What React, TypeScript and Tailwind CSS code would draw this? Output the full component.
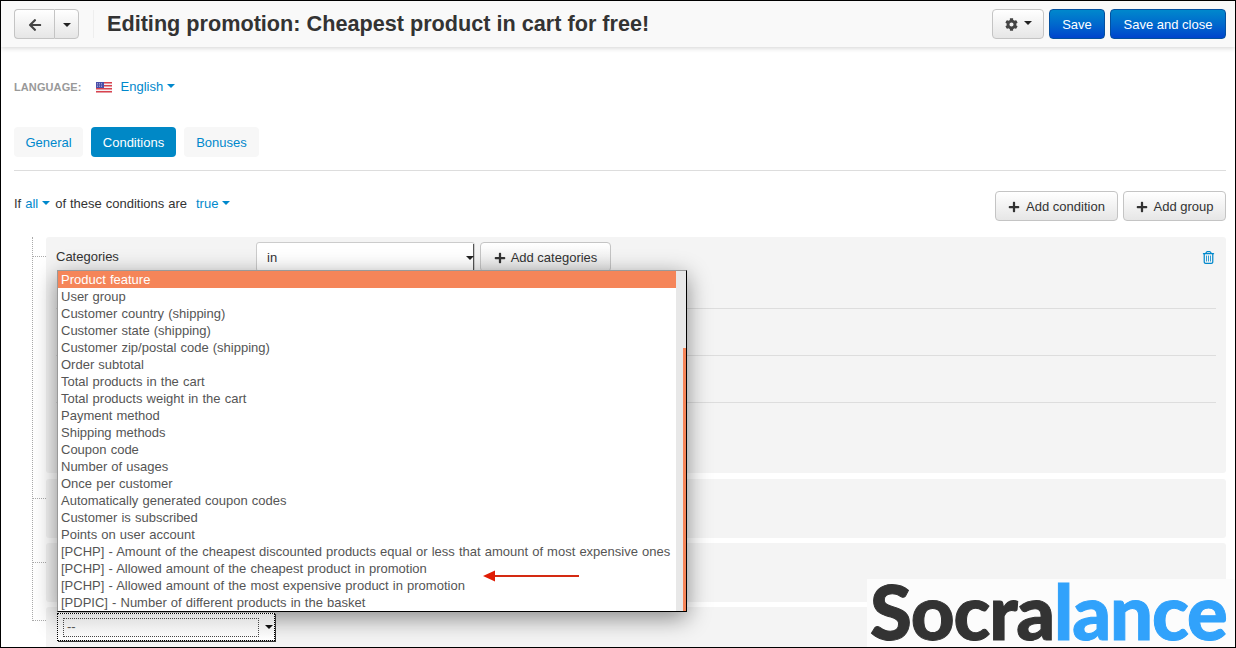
import { FaArrowLeft, FaCog, FaPlus } from "react-icons/fa";
import { FaRegTrashCan } from "react-icons/fa6";

const options = [
  "User group",
  "Customer country (shipping)",
  "Customer state (shipping)",
  "Customer zip/postal code (shipping)",
  "Order subtotal",
  "Total products in the cart",
  "Total products weight in the cart",
  "Payment method",
  "Shipping methods",
  "Coupon code",
  "Number of usages",
  "Once per customer",
  "Automatically generated coupon codes",
  "Customer is subscribed",
  "Points on user account",
  "[PCHP] - Amount of the cheapest discounted products equal or less that amount of most expensive ones",
  "[PCHP] - Allowed amount of the cheapest product in promotion",
  "[PCHP] - Allowed amount of the most expensive product in promotion",
  "[PDPIC] - Number of different products in the basket",
];

const btn =
  "h-[30px] flex items-center justify-center rounded-[4px] border border-[#c4c4c4] bg-gradient-to-b from-white to-[#e6e6e6] pt-[1px] text-[13px] text-[#333]";
const blueBtn =
  "h-[30px] flex items-center justify-center rounded-[4px] border border-[#04509f] bg-gradient-to-b from-[#0088cc] to-[#0044cc] pt-[1px] text-[13px] text-white";

function Caret({ className }: { className: string }) {
  return <span className={"inline-block w-0 h-0 border-x-[4px] border-x-transparent border-t-[4px] " + className} />;
}

function Flag() {
  return (
    <svg width="16" height="11" viewBox="0 0 16 11" className="block">
      <rect width="16" height="11" fill="#f3f3f6" />
      <rect y="0" width="16" height="1.5" fill="#d9434e" />
      <rect y="3" width="16" height="1.5" fill="#d9434e" />
      <rect y="6" width="16" height="1.5" fill="#d9434e" />
      <rect y="9" width="16" height="1.5" fill="#d9434e" />
      <rect width="8" height="6" fill="#4a4fa8" />
      <path d="M1 1.5h6M1 3h6M1 4.5h6" stroke="#c9cbea" strokeWidth="0.6" strokeDasharray="1 1" />
    </svg>
  );
}

function Tab({ label, active, width }: { label: string; active?: boolean; width: string }) {
  return (
    <div
      className={
        "h-[30px] pt-[1px] flex items-center justify-center rounded-[4px] text-[13px] " +
        width +
        (active ? " bg-[#0088c6] text-white" : " bg-[#f7f7f7] text-[#0088cc]")
      }
    >
      {label}
    </div>
  );
}

function Tree({ height }: { height: string }) {
  return <div className={"w-[13px] shrink-0 border-b border-dotted border-[#aaa] " + height} />;
}

export default function App() {
  return (
    <div className="relative w-[1236px] h-[648px] overflow-hidden border border-black bg-white font-['Liberation_Sans',Arial,sans-serif] text-[13px] text-[#333]">
      <header className="h-[46px] flex items-center pl-[13px] pr-[9px] bg-[#f9f9f9] shadow-[0_1px_5px_rgba(0,0,0,0.18)]">
        <div className="flex">
          <div className={btn + " w-[40px] rounded-r-none border-r-0 h-[29px] text-[#444]"}>
            <FaArrowLeft size={14} />
          </div>
          <div className={btn + " w-[25px] rounded-l-none h-[29px]"}>
            <Caret className="border-t-[#222]" />
          </div>
        </div>
        <div className="ml-[14px] h-[28px] border-l border-[#eee]" />
        <h1 className="ml-[13px] text-[21.65px] font-bold text-[#333] leading-none">
          Editing promotion: Cheapest product in cart for free!
        </h1>
        <div className="ml-auto flex gap-[5px]">
          <div className={btn + " w-[52px] gap-[6px] text-[#444]"}>
            <FaCog size={13} />
            <Caret className="border-t-[#222] -mt-[3px]" />
          </div>
          <div className={blueBtn + " w-[56px]"}>Save</div>
          <div className={blueBtn + " w-[116px]"}>Save and close</div>
        </div>
      </header>

      <main className="pl-[13px] pr-[9px]">
        <div className="mt-[31px] h-[18px] flex items-center">
          <span className="text-[11px] font-bold text-[#999] tracking-[0.1px]">LANGUAGE:</span>
          <span className="ml-[14px]"><Flag /></span>
          <span className="ml-[9px] text-[#0088cc]">English</span>
          <Caret className="ml-[4px] -mt-[3px] border-t-[#0088cc]" />
        </div>

        <div className="mt-[31px] flex gap-[8px]">
          <Tab label="General" width="w-[69px]" />
          <Tab label="Conditions" active width="w-[85px]" />
          <Tab label="Bonuses" width="w-[75px]" />
        </div>

        <div className="mt-[13px] border-t border-[#ddd]" />

        <div className="mt-[20px] h-[30px] flex justify-between">
          <div className="h-[26px] flex items-center">
            <span>If</span>
            <span className="ml-[4px] text-[#0088cc]">all</span>
            <Caret className="ml-[4px] -mt-[3px] border-t-[#0088cc]" />
            <span className="ml-[5px] [word-spacing:0.3px]">of these conditions are</span>
            <span className="ml-[9px] text-[#0088cc]">true</span>
            <Caret className="ml-[4px] -mt-[3px] border-t-[#0088cc]" />
          </div>
          <div className="flex gap-[5px]">
            <div className={btn + " w-[123px] gap-[6px]"}><FaPlus size={12} />Add condition</div>
            <div className={btn + " w-[103px] gap-[6px]"}><FaPlus size={12} />Add group</div>
          </div>
        </div>

        <div className="mt-[16px] ml-[18px] flex">
          <div className="w-[1px] border-l border-dotted border-[#aaa] h-[384px]" />
          <div className="flex-1 flex flex-col">
            <div className="flex">
              <Tree height="h-[20px]" />
              <div className="flex-1 h-[236px] rounded-[3px] bg-[#f4f4f4] pt-[5px] px-[10px]">
                <div className="flex items-center h-[30px]">
                  <span className="w-[200px]">Categories</span>
                  <div className="w-[219px] h-[30px] flex items-center pl-[10px] pt-[1px] rounded-[3px] border border-[#ccc] bg-white justify-between">
                    in
                    <div className="h-full w-[8px] flex items-center justify-center border-r border-[#555]"><Caret className="border-x-[2px] border-t-[3px] border-t-[#222]" /></div>
                  </div>
                  <div className={btn + " ml-[5px] w-[131px] gap-[5px]"}><FaPlus size={12} />Add categories</div>
                  <FaRegTrashCan size={13} className="ml-auto mr-[1px] text-[#0088cc]" />
                </div>
                <div className="mt-[36px] h-[47px] border-t border-[#ddd]" />
                <div className="h-[47px] border-t border-[#ddd]" />
                <div className="border-t border-[#ddd]" />
              </div>
            </div>
            <div className="flex mt-[6px]">
              <Tree height="h-[20px]" />
              <div className="flex-1 h-[59px] rounded-[3px] bg-[#f4f4f4]" />
            </div>
            <div className="flex mt-[5px]">
              <Tree height="h-[20px]" />
              <div className="flex-1 h-[59px] rounded-[3px] bg-[#f4f4f4]" />
            </div>
            <div className="flex mt-[5px]">
              <Tree height="h-[14px]" />
              <div className="flex-1 h-[59px] rounded-[3px] bg-[#f4f4f4]" />
            </div>
          </div>
        </div>
      </main>

      {/* open select list */}
      <div className="absolute left-[56px] top-[269px] w-[630px] h-[342px] bg-white border-t border-l border-[#999] border-r-black border-b-black border-r border-b shadow-[0_6px_22px_rgba(0,0,0,0.45)] flex">
        <div className="w-[618px] text-[13px] [word-spacing:0.5px] text-[#555] leading-[17px]">
          <div className="h-[17px] pl-[3px] bg-[#f58559] text-white">Product feature</div>
          {options.map((o) => (
            <div key={o} className="h-[17px] pl-[3px] whitespace-nowrap">{o}</div>
          ))}
        </div>
        <div className="flex-1 bg-[#e8e8e8] flex justify-end">
          <div className="mt-[77px] w-[3px] bg-[#f58559]" />
        </div>
      </div>

      {/* focused select under the list */}
      <div className="absolute left-[56px] top-[612px] w-[218px] h-[28px] border border-dotted border-black bg-gradient-to-b from-[#ddd] to-white flex items-center pl-[5px] shadow-[1px_1px_0_#333]">
        <div className="w-[196px] shrink-0 h-[19px] border border-dotted border-[#444] flex items-center pl-[3px] text-[#555]">--</div>
        <Caret className="ml-[6px] border-x-[3px] border-t-[3px] border-t-[#111]" />
      </div>

      {/* watermark */}
      <div className="absolute right-0 bottom-0 w-[368px] h-[68px] bg-[#fcfcfc] flex items-start justify-start pl-[3px] overflow-hidden font-['Lato',sans-serif] font-black text-[76px] leading-[64px] tracking-[-1.1px] [-webkit-text-stroke:1px_currentColor]">
        <span className="text-[#333]">Socra</span>
        <span className="text-[#31a2fb]">lance</span>
      </div>

      {/* red arrow annotation */}
      <svg width="100" height="16" viewBox="0 0 100 16" className="absolute left-[482px] top-[567px]">
        <line x1="10" y1="8" x2="96" y2="8" stroke="#d42a12" strokeWidth="2" />
        <polygon points="0,8 12,2.5 12,13.5" fill="#e01c04" />
      </svg>
    </div>
  );
}
